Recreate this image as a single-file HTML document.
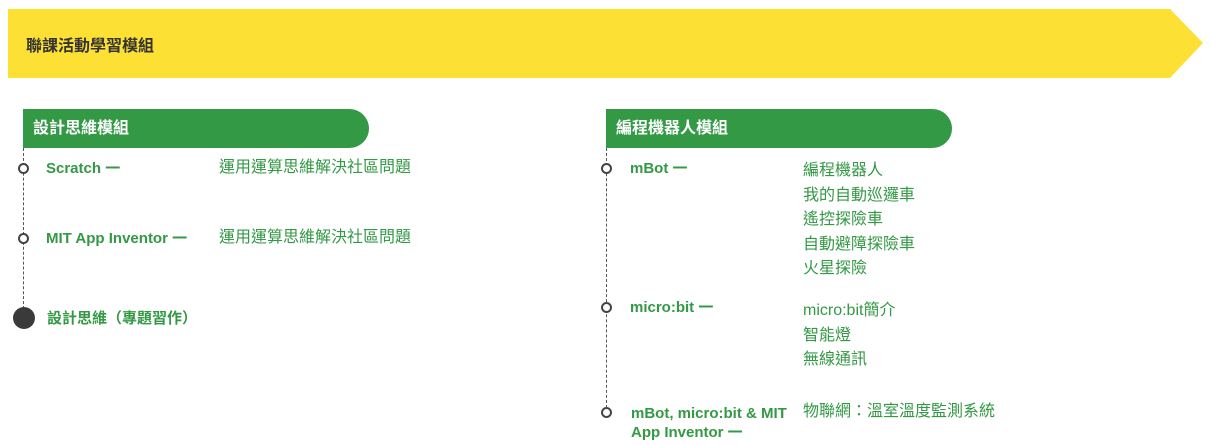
<!DOCTYPE html>
<html><head><meta charset="utf-8"><style>
body{margin:0;width:1211px;height:445px;background:#fff;position:relative;overflow:hidden;font-family:"Liberation Sans","Noto Sans CJK TC",sans-serif;}
.a{position:absolute;white-space:nowrap}
.hd{position:absolute;height:39px;background:#339944;color:#fff;font-weight:bold;font-size:16px;line-height:40px;padding-left:10px;box-sizing:border-box;border-radius:0 20px 20px 0}
.ln{position:absolute;border-left:1px dashed #555;width:0}
.c{position:absolute;width:7px;height:7px;border:2px solid #444;border-radius:50%;background:#fff}
.t{position:absolute;color:#339944;font-weight:bold;font-size:15px;line-height:19px;white-space:nowrap}
.d{position:absolute;color:#339944;font-size:16px;line-height:24.5px;white-space:nowrap}
</style></head><body>
<svg class="a" style="left:0;top:0" width="1211" height="90"><polygon points="8,9 1170,9 1203,43 1170,78 8,78" fill="#FDE034"/></svg>
<div class="a" style="left:26px;top:32px;font-size:16px;font-weight:bold;color:#333">聯課活動學習模組</div>

<div class="hd" style="left:23px;top:109px;width:346px">設計思維模組</div>
<div class="ln" style="left:23px;top:148px;height:166px"></div>
<div class="c" style="left:18px;top:163px"></div>
<div class="c" style="left:18px;top:233px"></div>
<div class="a" style="left:13px;top:307px;width:22px;height:22px;border-radius:50%;background:#3a3a3a"></div>
<div class="t" style="left:46px;top:159px">Scratch 一</div>
<div class="d" style="left:219px;top:156px">運用運算思維解決社區問題</div>
<div class="t" style="left:46px;top:229px">MIT App Inventor 一</div>
<div class="d" style="left:219px;top:226px">運用運算思維解決社區問題</div>
<div class="t" style="left:47px;top:309px">設計思維（專題習作）</div>

<div class="hd" style="left:606px;top:109px;width:346px">編程機器人模組</div>
<div class="ln" style="left:606px;top:148px;height:260px"></div>
<div class="c" style="left:601px;top:163px"></div>
<div class="c" style="left:601px;top:302px"></div>
<div class="c" style="left:601px;top:407px"></div>
<div class="t" style="left:630px;top:159px">mBot 一</div>
<div class="d" style="left:803px;top:159px">編程機器人<br>我的自動巡邏車<br>遙控探險車<br>自動避障探險車<br>火星探險</div>
<div class="t" style="left:630px;top:298px">micro:bit 一</div>
<div class="d" style="left:803px;top:299px">micro:bit簡介<br>智能燈<br>無線通訊</div>
<div class="t" style="left:631px;top:404px">mBot, micro:bit &amp; MIT<br>App Inventor 一</div>
<div class="d" style="left:803px;top:400px">物聯網：溫室溫度監測系統</div>
</body></html>
